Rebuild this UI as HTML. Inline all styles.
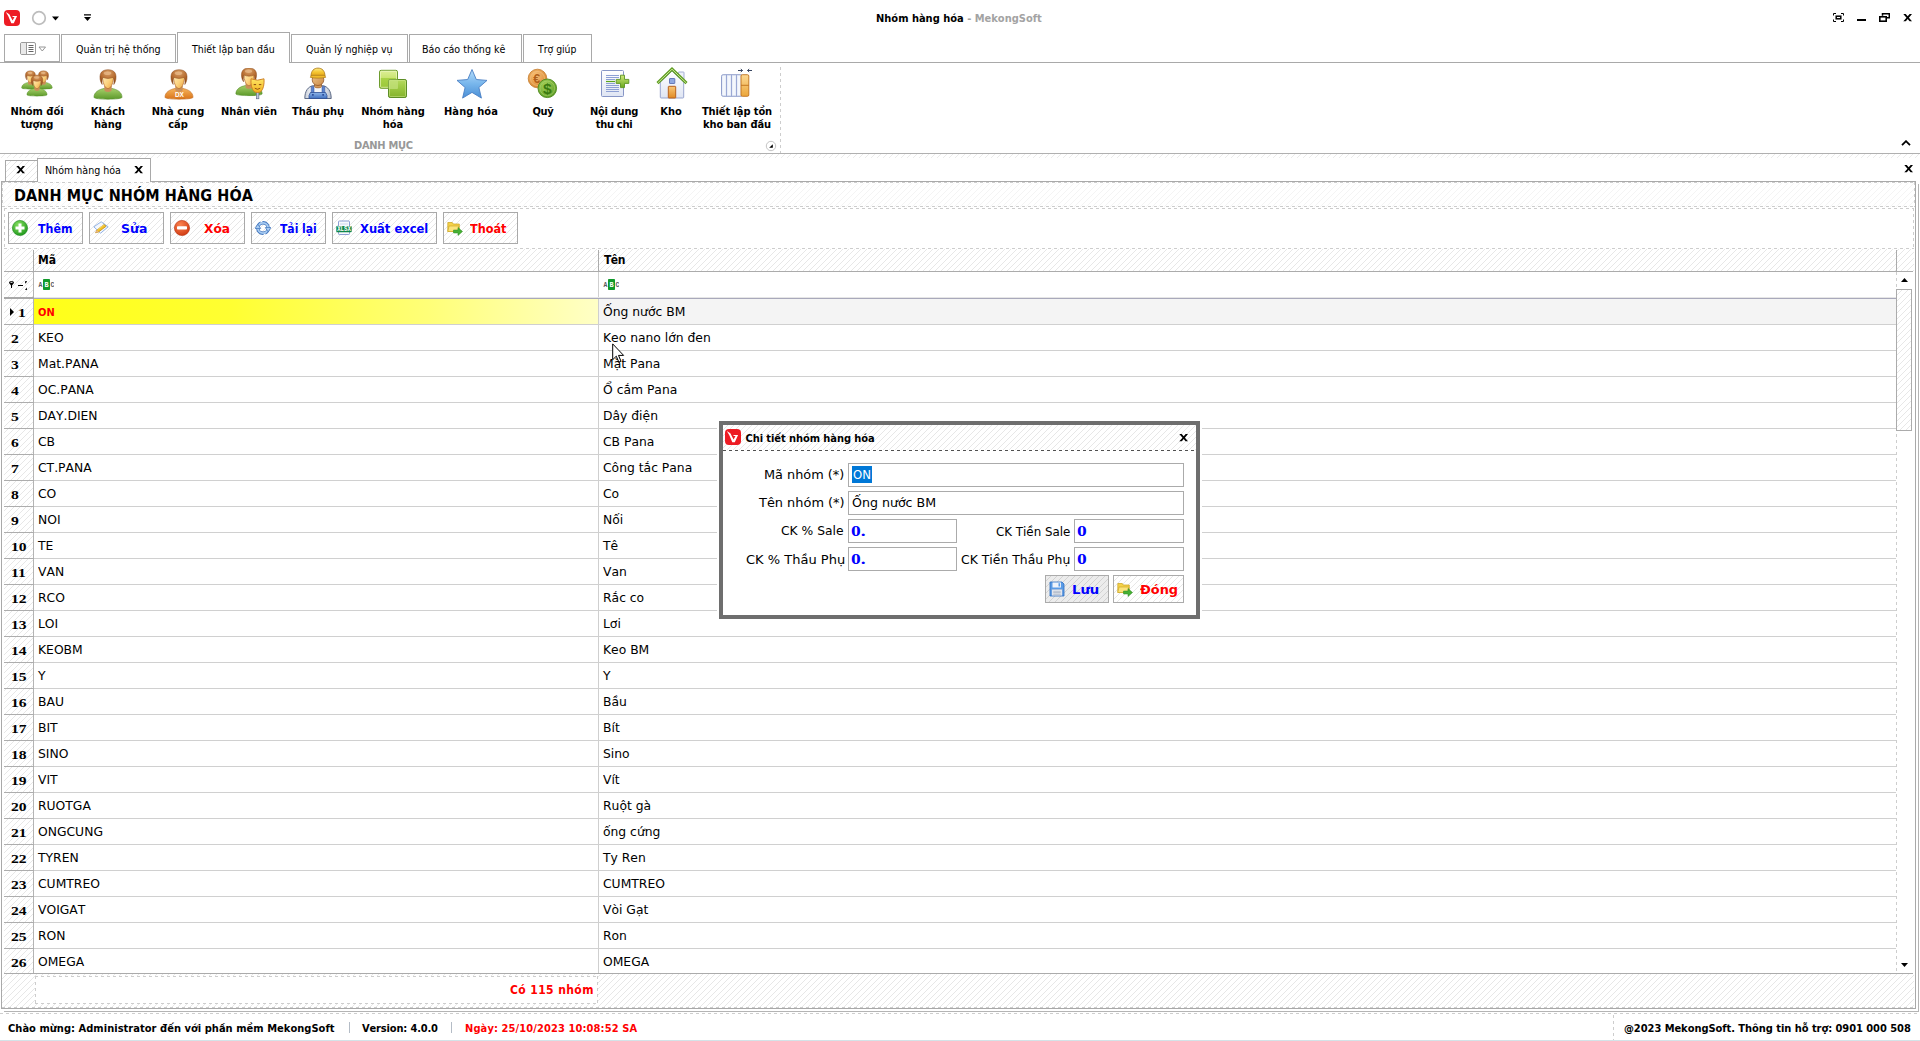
<!DOCTYPE html>
<html lang="vi"><head><meta charset="utf-8"><title>Nhóm hàng hóa - MekongSoft</title>
<style>
*{box-sizing:border-box;margin:0;padding:0}
html,body{width:1920px;height:1041px;overflow:hidden;background:#fff}
body{position:relative;font-family:"DejaVu Sans Condensed","Liberation Sans",sans-serif;font-size:11px;color:#000;-webkit-font-smoothing:antialiased;font-kerning:none;font-variant-ligatures:none}
.abs,#app div,#app span,#app svg{position:absolute}
#app{position:absolute;left:0;top:0;width:1920px;height:1041px;overflow:hidden}
.hatch{background-color:#fff;background-image:repeating-linear-gradient(135deg,rgba(0,0,0,0) 0,rgba(0,0,0,0) 3.45px,#e7e7e7 3.45px,#e7e7e7 4.2426px)}
.hatchf{background-color:#fff;background-image:repeating-linear-gradient(135deg,rgba(0,0,0,0) 0,rgba(0,0,0,0) 3.45px,#f4f4f4 3.45px,#f4f4f4 4.2426px)}
.hatch2{background-color:#ececec;background-image:repeating-linear-gradient(135deg,rgba(0,0,0,0) 0,rgba(0,0,0,0) 3.45px,#d2d2d2 3.45px,#d2d2d2 4.2426px)}
.t{white-space:nowrap;line-height:1}
.b{font-weight:bold}
/* ribbon tabs */
.rtab{top:34px;height:28px;border:1px solid #a9a9a9;border-bottom:none;background:#fff}
.rtab.act{top:32px;height:31px;z-index:2}
.rtab .t{top:9px;font-size:11px}
.rtab.act .t{top:11px}
.rl{font-weight:bold;font-size:11px;text-align:center;line-height:13px;white-space:nowrap;transform:translateX(-50%)}
/* toolbar buttons */
.tb{top:212px;height:32px;border:1px solid #a9a9a9}
.tb .t{font-weight:bold;font-size:13px;top:9px}
.dash{background-image:repeating-linear-gradient(90deg,#cdcdcd 0,#cdcdcd 3px,rgba(0,0,0,0) 3px,rgba(0,0,0,0) 6px),repeating-linear-gradient(90deg,#cdcdcd 0,#cdcdcd 3px,rgba(0,0,0,0) 3px,rgba(0,0,0,0) 6px),repeating-linear-gradient(180deg,#cdcdcd 0,#cdcdcd 3px,rgba(0,0,0,0) 3px,rgba(0,0,0,0) 6px),repeating-linear-gradient(180deg,#cdcdcd 0,#cdcdcd 3px,rgba(0,0,0,0) 3px,rgba(0,0,0,0) 6px);background-size:100% 1px,100% 1px,1px 100%,1px 100%;background-position:0 0,0 100%,0 0,100% 0;background-repeat:no-repeat}
.dh{height:1px;background-image:repeating-linear-gradient(90deg,#cdcdcd 0,#cdcdcd 3px,rgba(0,0,0,0) 3px,rgba(0,0,0,0) 6px)}
.dv{width:1px;background-image:repeating-linear-gradient(180deg,#cdcdcd 0,#cdcdcd 3px,rgba(0,0,0,0) 3px,rgba(0,0,0,0) 6px)}
.hl{height:1px;background:#c9c9c9;left:4px;width:1892px}
.row{left:4px;width:1892px;height:26px}
.row .rn{left:6.600px;top:0;height:25px;font:bold 13px/27px "Liberation Serif",serif;transform:scaleX(1.2);transform-origin:0 0}
.row.sel .rn{left:14.200px}
.row .c1{left:34px;top:6px;font-size:13px;line-height:13px;white-space:nowrap;transform:scaleX(1.055);transform-origin:0 0}
.row .c2{left:599px;top:6px;font-size:13px;line-height:13px;white-space:nowrap;transform:scaleX(1.055);transform-origin:0 0}
.row::after{content:"";position:absolute;left:0;top:25px;width:1892px;height:1px;background:linear-gradient(90deg,#adadad 0,#adadad 30px,#d0d0d0 30px)}
.row.sel .c1{color:#f00;font-weight:bold;font-size:11px;top:7px;transform:none}
/* dialog */
.fld{border:1px solid #ababab;background:#fff;height:24px}
.lbl{font-size:13px;line-height:13px;white-space:nowrap}
.num{font:bold 15px/15px "Liberation Serif",serif;color:#00f;left:2px;top:4px;transform:scaleX(1.3);transform-origin:0 0}

</style></head>
<body>
<style>
#ttl{margin-left:0.0px;margin-top:0px;letter-spacing:0.0px;}
#rt1{margin-left:0.0px;margin-top:0px;transform:scaleX(0.9655);transform-origin:0 0;}
#rt2{margin-left:0.0px;margin-top:0px;transform:scaleX(0.9535);transform-origin:0 0;}
#rt3{margin-left:0.0px;margin-top:0px;transform:scaleX(0.9558);transform-origin:0 0;}
#rt4{margin-left:-2.0px;margin-top:0px;transform:scaleX(0.9647);transform-origin:0 0;}
#rt5{margin-left:-0.5px;margin-top:0px;transform:scaleX(0.9394);transform-origin:0 0;}
#rl1{margin-left:0.0px;margin-top:0px;letter-spacing:0.0px;}
#rl4{margin-left:0.0px;margin-top:0px;letter-spacing:0.0px;}
#rl7{margin-left:0.0px;margin-top:0px;letter-spacing:0.14px;}
#rl8{margin-left:0.0px;margin-top:0px;letter-spacing:-0.25px;}
#rl9{margin-left:0.0px;margin-top:0px;letter-spacing:-0.286px;}
#rl10{margin-left:0.0px;margin-top:0px;letter-spacing:0.0px;}
#rl11{margin-left:1.0px;margin-top:0px;letter-spacing:-0.084px;}
#dtab{margin-left:-1.0px;margin-top:0px;transform:scaleX(0.9616);transform-origin:0 0;}
#ptitle{margin-left:0.0px;margin-top:0px;letter-spacing:0.095px;}
#tb1{margin-left:0.0px;margin-top:0px;transform:scaleX(0.9444);transform-origin:0 0;}
#tb2{margin-left:-1.6px;margin-top:0px;transform:scaleX(1.0697);transform-origin:0 0;}
#tb3{margin-left:0.0px;margin-top:0px;transform:scaleX(1.0423);transform-origin:0 0;}
#tb4{margin-left:0.0px;margin-top:0px;transform:scaleX(0.9235);transform-origin:0 0;}
#tb5{margin-left:0.0px;margin-top:0px;transform:scaleX(0.9855);transform-origin:0 0;}
#tb6{margin-left:-0.6px;margin-top:0px;transform:scaleX(0.9634);transform-origin:0 0;}
#h1{margin-left:0.0px;margin-top:0px;letter-spacing:0.0px;}
#h2{margin-left:1.0px;margin-top:0px;letter-spacing:-0.5px;}
#st1{margin-left:0.0px;margin-top:0px;letter-spacing:0.039px;}
#st2{margin-left:0.0px;margin-top:0px;letter-spacing:-0.154px;}
#st3{margin-left:0.0px;margin-top:0px;letter-spacing:0.111px;}
#st4{margin-left:0.0px;margin-top:0px;letter-spacing:-0.042px;}
#dttl{margin-left:0.5px;margin-top:0px;letter-spacing:-0.07px;}
#bluu{margin-left:-1.6px;margin-top:0px;transform:scaleX(1.1304);transform-origin:0 0;}
#bdong{margin-left:-0.4px;margin-top:0px;transform:scaleX(1.1004);transform-origin:0 0;}
#foot{margin-left:0.0px;margin-top:0px;letter-spacing:0.4px;}
#lb1{margin-left:-1.0px;margin-top:0px;transform:scaleX(1.0988);transform-origin:0 0;}
#lb2{margin-left:0.0px;margin-top:0px;transform:scaleX(1.1039);transform-origin:0 0;}
#lb3{margin-left:0.0px;margin-top:0px;transform:scaleX(1.0525);transform-origin:0 0;}
#lb4{margin-left:0.0px;margin-top:0px;transform:scaleX(1.0142);transform-origin:0 0;}
#lb5{margin-left:0.0px;margin-top:0px;transform:scaleX(1.1125);transform-origin:0 0;}
#lb6{margin-left:0.0px;margin-top:0px;transform:scaleX(1.0608);transform-origin:0 0;}
#grp{margin-left:0.0px;margin-top:0px;letter-spacing:-0.286px;}
#f2{margin-left:-0.8px;margin-top:0px;transform:scaleX(1.0779);transform-origin:0 0;}
</style>
<svg width="0" height="0" style="position:absolute">
<defs>
<linearGradient id="gFace" x1="0" y1="0" x2="1" y2="1"><stop offset="0" stop-color="#fff1c4"/><stop offset=".55" stop-color="#fcd27e"/><stop offset="1" stop-color="#e9a03c"/></linearGradient>
<radialGradient id="gHair" cx=".5" cy=".2" r=".8"><stop offset="0" stop-color="#d9a066"/><stop offset=".6" stop-color="#b56a2e"/><stop offset="1" stop-color="#8a4516"/></radialGradient>
<linearGradient id="gGreen" x1="0" y1="0" x2="0" y2="1"><stop offset="0" stop-color="#a6cf6a"/><stop offset="1" stop-color="#5d9a2b"/></linearGradient>
<linearGradient id="gOrange" x1="0" y1="0" x2="0" y2="1"><stop offset="0" stop-color="#f6b35a"/><stop offset="1" stop-color="#d9741a"/></linearGradient>
<linearGradient id="gBlue" x1="0" y1="0" x2="0" y2="1"><stop offset="0" stop-color="#8db4e8"/><stop offset="1" stop-color="#3f6fc0"/></linearGradient>
<linearGradient id="gStar" x1="0" y1="0" x2="0" y2="1"><stop offset="0" stop-color="#b4dcfa"/><stop offset=".5" stop-color="#78b6ec"/><stop offset="1" stop-color="#4a8fd6"/></linearGradient>
<linearGradient id="gSq" x1="0" y1="0" x2="1" y2="1"><stop offset="0" stop-color="#c4e27a"/><stop offset="1" stop-color="#6fa52e"/></linearGradient>
<linearGradient id="gDoc" x1="0" y1="0" x2="0" y2="1"><stop offset="0" stop-color="#ffffff"/><stop offset="1" stop-color="#dfe5f3"/></linearGradient>
<linearGradient id="gDoor" x1="0" y1="0" x2="0" y2="1"><stop offset="0" stop-color="#f9c777"/><stop offset="1" stop-color="#e08a24"/></linearGradient>
<linearGradient id="gColsO" x1="0" y1="0" x2="0" y2="1"><stop offset="0" stop-color="#fcd994"/><stop offset="1" stop-color="#eba63a"/></linearGradient>
<linearGradient id="gMask" x1="0" y1="0" x2="0" y2="1"><stop offset="0" stop-color="#fde664"/><stop offset="1" stop-color="#f2b11e"/></linearGradient>
<linearGradient id="gHelm" x1="0" y1="0" x2="0" y2="1"><stop offset="0" stop-color="#fdeb8c"/><stop offset=".45" stop-color="#f6c935"/><stop offset="1" stop-color="#e3a013"/></linearGradient>
<linearGradient id="gSq1" x1="0" y1="0" x2="0" y2="1"><stop offset="0" stop-color="#deef98"/><stop offset=".4" stop-color="#cbe574"/><stop offset=".43" stop-color="#a9d346"/><stop offset="1" stop-color="#9ac63a"/></linearGradient>
<linearGradient id="gSq2" x1="0" y1="0" x2="0" y2="1"><stop offset="0" stop-color="#b8da62"/><stop offset=".35" stop-color="#a2cd48"/><stop offset="1" stop-color="#84b22c"/></linearGradient>
<linearGradient id="gWork" x1="0" y1="0" x2="1" y2="0"><stop offset="0" stop-color="#c9cfda"/><stop offset=".25" stop-color="#f1f3f6"/><stop offset=".75" stop-color="#e3e6ec"/><stop offset="1" stop-color="#b4bccb"/></linearGradient>
<linearGradient id="gFaceW" x1="0" y1="0" x2="1" y2="1"><stop offset="0" stop-color="#f0c48a"/><stop offset="1" stop-color="#c98a48"/></linearGradient>
<linearGradient id="gPlusG" x1="0" y1="0" x2="0" y2="1"><stop offset="0" stop-color="#cfea7c"/><stop offset="1" stop-color="#69a81e"/></linearGradient>
<radialGradient id="gPlus" cx=".4" cy=".3" r=".8"><stop offset="0" stop-color="#86e060"/><stop offset="1" stop-color="#149014"/></radialGradient>
<radialGradient id="gMinus" cx=".4" cy=".3" r=".8"><stop offset="0" stop-color="#fb8350"/><stop offset="1" stop-color="#cc330c"/></radialGradient>
<radialGradient id="gCoinO" cx=".4" cy=".35" r=".7"><stop offset="0" stop-color="#f9c27a"/><stop offset="1" stop-color="#d5832c"/></radialGradient>
<radialGradient id="gCoinG" cx=".4" cy=".35" r=".7"><stop offset="0" stop-color="#a7d35c"/><stop offset="1" stop-color="#5a9a24"/></radialGradient>

<symbol id="logo" viewBox="0 0 16 16"><rect width="16" height="16" rx="4" fill="#ed1c24"/><path d="M1.800 2.100l3.500 2.100 3.300 6.400 1.900-3.700-2.300.200.600-1h4.300l-3.300 7.100h-2.500l-3.100-7.100z" fill="#fff"/></symbol>

<symbol id="p-head" viewBox="0 0 32 32">
<path d="M12.300 18h7.400v4c0 2.600-7.400 2.600-7.400 0z" fill="#c98f5a"/>
<path d="M10.600 9.500c0-3 2.400-4.500 5.400-4.500s5.400 1.500 5.400 4.500c0 5-2 9-3.600 10.400-1.200.900-2.400.900-3.600 0-1.600-1.400-3.600-5.400-3.600-10.400z" fill="url(#gFace)" stroke="#b0642a" stroke-width=".7"/>
<path d="M10.200 16.500c-2.200-3-2.800-7.500-1.800-10.500 1-3 4-4.300 7.600-4.300s6.600 1.300 7.600 4.300c1 3 .400 7.500-1.800 10.500.500-3 .300-5.500-.800-7.200-2.400 1.500-7.600 1.500-10 0-1.100 1.700-1.300 4.200-.800 7.200z" fill="url(#gHair)" stroke="#8a4a1c" stroke-width=".5"/>
<ellipse cx="15.500" cy="5.200" rx="3.800" ry="1.800" fill="#e8b98a" opacity=".75"/>
</symbol>
<symbol id="p-green" viewBox="0 0 32 32">
<path d="M2 29.300c0-5 4.500-7.800 10.300-8.900l3.700 2.300 3.700-2.300c5.800 1.100 10.300 3.900 10.300 8.900 0 2.500-28 2.500-28 0z" fill="url(#gGreen)" stroke="#4f8a22" stroke-width=".6"/>
<use href="#p-head"/>
</symbol>
<symbol id="p-orange" viewBox="0 0 32 32">
<path d="M2 29.300c0-5 4.500-7.800 10.300-8.900l3.700 2.300 3.700-2.300c5.800 1.100 10.300 3.900 10.300 8.900 0 2.500-28 2.500-28 0z" fill="url(#gOrange)" stroke="#c0661a" stroke-width=".6"/>
<use href="#p-head"/>
</symbol>
<symbol id="i-group" viewBox="0 0 32 32">
<use href="#p-green" x="1" y="3" width="17" height="17"/>
<use href="#p-green" x="14" y="3" width="17" height="17"/>
<use href="#p-green" x="6" y="9" width="21" height="21"/>
</symbol>
<symbol id="i-mask" viewBox="0 0 32 32">
<use href="#p-green" x="0" y="-1.600" width="30" height="30"/>
<rect x="22.300" y="24" width="2.600" height="6.800" fill="#bcc6d8" stroke="#56637f" stroke-width=".6"/>
<path d="M17 10.800q6.500 2.800 13 0c.400 5.500-.600 10.200-3 12.700-1.600 1.300-5.400 1.300-7 0-2.400-2.500-3.400-7.200-3-12.700z" fill="url(#gMask)" stroke="#cf8327" stroke-width="1" stroke-linejoin="round"/>
<path d="M19.700 16.600h2.400M24.900 16.600h2.400" stroke="#8a4a12" stroke-width="1"/>
<path d="M20.800 20.200q2.700 2.200 5.400 0" stroke="#8a4a12" stroke-width=".9" fill="none"/>
</symbol>
<symbol id="i-worker" viewBox="0 0 32 32">
<path d="M2.800 31.500c0-7.500 3.200-12 8.700-12.900h9c5.500.9 8.700 5.400 8.700 12.900z" fill="url(#gWork)" stroke="#4f5d7c" stroke-width=".9"/>
<rect x="11.800" y="20" width="8.400" height="5.500" fill="#f3f5f8"/>
<path d="M9.200 19.400h2.800v7h-2.800zM20 19.400h2.800v7h-2.800z" fill="#5b82cf" stroke="#2f4f94" stroke-width=".5"/>
<path d="M8.400 25.500h15.200l1.400 3v3h-18v-3z" fill="url(#gBlue)" stroke="#2f4f94" stroke-width=".8"/>
<circle cx="10.900" cy="27.800" r=".9" fill="#1c3a8c"/><circle cx="21.100" cy="27.800" r=".9" fill="#1c3a8c"/>
<path d="M12.500 16h7v3.400c0 2-7 2-7 0z" fill="#d39a5c" stroke="#8a4a1c" stroke-width=".5"/>
<ellipse cx="16" cy="12.800" rx="5.800" ry="5.700" fill="url(#gFaceW)" stroke="#8a4a1c" stroke-width=".7"/>
<path d="M9 9.400c0-5.700 3-8.300 7-8.300s7 2.600 7 8.300z" fill="url(#gHelm)" stroke="#a8761a" stroke-width=".8"/>
<path d="M9.300 8.300h13.400l.9 2.100c-4 1-11.200 1-15.200 0z" fill="#f1bc2c" stroke="#a8761a" stroke-width=".7"/>
</symbol>
<symbol id="i-squares" viewBox="0 0 32 32">
<rect x="2.500" y="2.300" width="18" height="18" rx="1.600" fill="url(#gSq1)" stroke="#6d9c2e" stroke-width="1"/>
<rect x="3.500" y="3.300" width="16" height="16" rx="1" fill="none" stroke="#eef8c8" stroke-width=".8" opacity=".8"/>
<rect x="11.500" y="11.500" width="18" height="18" rx="1.600" fill="url(#gSq2)" stroke="#5c8c26" stroke-width="1"/>
<rect x="12.500" y="12.500" width="16" height="16" rx="1" fill="none" stroke="#d4ec98" stroke-width=".8" opacity=".6"/>
<rect x="11.500" y="11.500" width="9.500" height="9.500" rx="1" fill="#c6e280" opacity=".7"/>
</symbol>
<symbol id="i-star" viewBox="0 0 32 32">
<path d="M16 1.500l4.300 10 10.700.9-8.100 7.100 2.500 10.600-9.400-5.700-9.400 5.700 2.500-10.600-8.100-7.100 10.700-.9z" fill="url(#gStar)" stroke="#4a7fc4" stroke-width=".9" stroke-linejoin="round"/>
</symbol>
<symbol id="i-coins" viewBox="0 0 32 32">
<circle cx="11.500" cy="10.500" r="9.300" fill="url(#gCoinO)" stroke="#c47a2a" stroke-width=".8"/>
<circle cx="11.500" cy="10.500" r="7" fill="none" stroke="#f8cf92" stroke-width=".7" opacity=".7"/>
<text x="10.800" y="15" font-family="Liberation Sans,sans-serif" font-weight="bold" font-size="12.500" text-anchor="middle" fill="#b0601a">€</text>
<circle cx="21.300" cy="20.300" r="9.300" fill="url(#gCoinG)" stroke="#4f8a1e" stroke-width=".9"/>
<circle cx="21.300" cy="20.300" r="7.300" fill="none" stroke="#c4e486" stroke-width=".7" opacity=".6"/>
<text x="21.300" y="26" font-family="Liberation Sans,sans-serif" font-weight="bold" font-size="15.500" text-anchor="middle" fill="#3a7a10">$</text>
</symbol>
<symbol id="i-doc" viewBox="0 0 32 32">
<rect x="3.500" y="2.500" width="22" height="26" rx="1" fill="url(#gDoc)" stroke="#8796c6" stroke-width="1"/>
<path d="M8 7.500h13M8 9.500h13M8 11.500h9M8 15.500h9M8 17.500h13M8 19.500h13M8 21.500h13M8 23.500h13" stroke="#8da0d4" stroke-width="1"/>
<path d="M8 13.500h9" stroke="#5aa51c" stroke-width="1.200"/>
<path d="M22.500 7.200h4v4.200h4.300v4h-4.300v4.200h-4v-4.200h-4.300v-4h4.300z" fill="url(#gPlusG)" stroke="#5c9424" stroke-width=".9" stroke-linejoin="round"/>
</symbol>
<symbol id="i-house" viewBox="0 0 32 32">
<rect x="22.300" y="5" width="5.700" height="9" rx=".6" fill="#eef1f9" stroke="#8f9dcb" stroke-width=".8"/>
<path d="M4.300 15l11.700-11 11.700 11v15.200c0 .5-.3.800-.8.800h-21.800c-.5 0-.8-.3-.8-.8z" fill="url(#gDoc)" stroke="#8f9dcb" stroke-width=".9"/>
<rect x="12.300" y="19.300" width="7.400" height="11.700" rx=".5" fill="url(#gDoor)" stroke="#b8601c" stroke-width="1"/>
<rect x="13.500" y="11.500" width="5.300" height="5" rx=".4" fill="#8fa8e0" stroke="#5c70b4" stroke-width=".9"/>
<path d="M1.500 16.200l14.500-14 14.500 14" fill="none" stroke="#5f9c22" stroke-width="3" stroke-linejoin="miter"/>
<path d="M1.900 15.800l14.100-13.600 14.100 13.600" fill="none" stroke="#d6f0a4" stroke-width=".9"/>
</symbol>
<symbol id="i-cols" viewBox="0 0 32 32">
<rect x="1.500" y="6.700" width="21" height="21.600" rx="1.600" fill="#e9eef8" stroke="#8796c6" stroke-width=".9"/>
<path d="M6.500 6.700v21.600M11.500 6.700v21.600M16.500 6.700v21.600" stroke="#9aa8d4" stroke-width="1"/>
<path d="M4 8v19M9 8v19M14 8v19M19 8v19" stroke="#fff" stroke-width="1.500" opacity=".7"/>
<rect x="21" y="6.700" width="7.800" height="21.600" rx="1.300" fill="url(#gColsO)" stroke="#c0701c" stroke-width=".9"/>
<path d="M21 17.300h7.800" stroke="#c0701c" stroke-width=".9"/>
<path d="M18 2.500h4.500M20.800 1l1.700 1.500-1.700 1.500M32 2.500h-4.500M29.200 1l-1.700 1.500 1.700 1.500" stroke="#35435f" stroke-width="1" fill="none"/>
</symbol>

<symbol id="s-plus" viewBox="0 0 16 16"><circle cx="8" cy="8" r="7.600" fill="url(#gPlus)" stroke="#1c8a1c" stroke-width=".6"/><path d="M6.500 3.500h3v3h3v3h-3v3h-3v-3h-3v-3h3z" fill="#fff"/></symbol>
<symbol id="s-minus" viewBox="0 0 16 16"><circle cx="8" cy="8" r="7.600" fill="url(#gMinus)" stroke="#b8300e" stroke-width=".6"/><rect x="3" y="6.300" width="10" height="3.200" rx=".8" fill="#fff"/></symbol>
<symbol id="s-edit" viewBox="0 0 16 16"><path d="M.8 6.800l7.400-5 7 5-7.600 6.400z" fill="#f4f8fe" stroke="#86a9e2" stroke-width=".9" stroke-linejoin="round"/><path d="M2.600 12.800l1.200-2.700 7.400-5.700 1.900 1.900-7.600 5.700z" fill="#f5c228" stroke="#b07f10" stroke-width=".7" stroke-linejoin="round"/><path d="M4.500 9.700l6.600-5" stroke="#fbe48a" stroke-width=".8"/><path d="M2.600 12.800l1.200-2.700 1.700 1.900z" fill="#e9b58e"/></symbol>
<symbol id="s-refresh" viewBox="0 0 16 16"><circle cx="8" cy="8" r="5.200" fill="none" stroke="#3f74bd" stroke-width="3.400"/><circle cx="8" cy="8" r="5.200" fill="none" stroke="#a9cdf3" stroke-width="1.800"/><path d="M0 8.500l2.800-4.300 2.900 4.300z" fill="#a9cdf3" stroke="#3f74bd" stroke-width=".7"/><path d="M16 7.500l-2.800 4.300-2.900-4.300z" fill="#a9cdf3" stroke="#3f74bd" stroke-width=".7"/><path d="M5.500 2.200l2-1.700M10.500 13.800l-2 1.700" stroke="#fff" stroke-width="1.300"/></symbol>
<symbol id="s-xlsx" viewBox="0 0 16 16"><rect x="2.500" y="1" width="11" height="13.500" rx=".8" fill="#f7f9fd" stroke="#8093cf" stroke-width=".9"/><path d="M4 4h8" stroke="#c5cfea" stroke-width=".8"/><rect x=".3" y="6" width="15.400" height="6.200" rx=".8" fill="#10864b"/><text x="8" y="11.300" font-family="Liberation Mono,monospace" font-weight="bold" font-size="6.400" text-anchor="middle" fill="#fff" textLength="13.600" lengthAdjust="spacingAndGlyphs">XLSX</text></symbol>
<symbol id="s-folder" viewBox="0 0 16 16"><path d="M.8 2.500h4.500l1 1.500h6v7.500h-11.500z" fill="#f5d24a" stroke="#c9a21c" stroke-width=".7"/><path d="M.8 11.500l1.200-5.500h9.800l-1 5.500z" fill="#fbe37a" stroke="#c9a21c" stroke-width=".6"/><path d="M6.500 10h4.500v-2.500l4.500 4-4.500 4v-2.500h-4.500z" fill="#46b034" stroke="#2c8a20" stroke-width=".5"/></symbol>
<symbol id="s-save" viewBox="0 0 16 16"><path d="M1 1h12l2 2v12h-14z" fill="#5a9be6" stroke="#2f6fc2" stroke-width=".8"/><rect x="3.500" y="1.500" width="8.500" height="5" fill="#eef3fb"/><rect x="9.500" y="2.200" width="1.600" height="3.300" fill="#5a9be6"/><rect x="3" y="8.500" width="10" height="6" fill="#f4f6fa" stroke="#aab5cc" stroke-width=".5"/><path d="M4.200 10.200h7.600M4.200 11.700h7.600M4.200 13.200h7.600" stroke="#8d98ad" stroke-width=".7"/></symbol>
<symbol id="s-abc" viewBox="0 0 16 11"><rect x="5" y="0" width="7" height="11" rx=".8" fill="#119a2b"/><text x="2.400" y="8" font-family="Liberation Mono,monospace" font-size="6.400" font-weight="bold" text-anchor="middle" fill="#5a5a5a">A</text><text x="8.500" y="8" font-family="Liberation Mono,monospace" font-size="6.800" font-weight="bold" text-anchor="middle" fill="#fff">B</text><text x="14.500" y="8" font-family="Liberation Mono,monospace" font-size="6.400" font-weight="bold" text-anchor="middle" fill="#5a5a5a">C</text></symbol>
<symbol id="s-x" viewBox="0 0 10 8"><path d="M.3 0h2.600l2.100 2.400 2.100-2.400h2.600l-3.400 3.900 3.600 4.100h-2.700l-2.200-2.600-2.200 2.600h-2.700l3.600-4.100z" fill="#000"/></symbol>
</defs>
</svg>

<div id="app">
<!-- title bar -->
<svg style="left:4px;top:10px" width="16" height="16"><use href="#logo"/></svg>
<svg style="left:31px;top:10px" width="16" height="16" viewBox="0 0 16 16"><circle cx="8" cy="8" r="6.300" fill="#fff" stroke="#bdbdbd" stroke-width="1.700"/></svg>
<svg style="left:52px;top:15.600px" width="8" height="5" viewBox="0 0 8 5"><path d="M0 .5h7l-3.500 4z" fill="#000"/></svg>
<svg style="left:83px;top:14px" width="9" height="8" viewBox="0 0 9 8"><path d="M1 .2h7v1.300h-7zM1 3h7l-3.500 4z" fill="#000"/></svg>
<span class="t b" id="ttl" style="left:876px;top:13px;font-size:11px">Nhóm hàng hóa<span style="position:static;color:#a3a3a3"> - MekongSoft</span></span>
<svg style="left:1833px;top:13px" width="11" height="9" viewBox="0 0 11 9"><path d="M.5 2.500v-2h2.500M8 .5h2.500v2M10.500 6.500v2h-2.500M3 8.500h-2.500v-2" fill="none" stroke="#000" stroke-width="1"/><rect x="3.200" y="3.200" width="4.600" height="2.600" fill="none" stroke="#000" stroke-width="1.500"/></svg>
<div style="left:1857px;top:19px;width:9px;height:2px;background:#000"></div>
<svg style="left:1879px;top:13px" width="11" height="9" viewBox="0 0 11 9"><path d="M3.500 2.800v-2h6.800v4h-2.300" fill="none" stroke="#000" stroke-width="1.500"/><rect x=".8" y="3.800" width="6.400" height="4.400" fill="#fff" stroke="#000" stroke-width="1.600"/></svg>
<svg style="left:1903px;top:14px" width="9.400" height="7.500"><use href="#s-x"/></svg>

<!-- ribbon tabs -->
<div class="rtab" style="left:4px;width:56px;height:28px;border-bottom:1px solid #a9a9a9">
 <svg style="left:15px;top:7px" width="27" height="14" viewBox="0 0 27 14"><rect x=".5" y=".5" width="15" height="12" rx="1.500" fill="#fff" stroke="#9a9a9a"/><rect x="1" y="1" width="5" height="11" fill="#e9e9e9"/><path d="M6.500 .5v12" stroke="#9a9a9a"/><path d="M8.500 3.500h5M8.500 5.500h5M8.500 7.500h5M8.500 9.500h5" stroke="#555" stroke-width=".9"/><path d="M19 5h6.500l-3.250 4z" fill="#fff" stroke="#8a8a8a" stroke-width=".9"/></svg>
</div>
<div class="rtab" style="left:61px;width:115px"><span class="t" id="rt1" style="left:14px">Quản trị hệ thống</span></div>
<div class="rtab act" style="left:177px;width:113px"><span class="t" id="rt2" style="left:14px">Thiết lập ban đầu</span></div>
<div class="rtab" style="left:291px;width:117px"><span class="t" id="rt3" style="left:14px">Quản lý nghiệp vụ</span></div>
<div class="rtab" style="left:409px;width:113px"><span class="t" id="rt4" style="left:14px">Báo cáo thống kê</span></div>
<div class="rtab" style="left:523px;width:69px"><span class="t" id="rt5" style="left:14px">Trợ giúp</span></div>

<div style="left:0;top:62px;width:1920px;height:1px;background:#a9a9a9;z-index:1"></div>
<!-- ribbon items -->
<svg style="left:19px;top:67px" width="36" height="32" viewBox="0 0 36 32"><use href="#p-green" x="1.400" y="2.700" width="20" height="20"/><use href="#p-green" x="14.500" y="2.700" width="20" height="20"/><use href="#p-green" x="6.500" y="6.800" width="23" height="23"/></svg>
<span class="rl" id="rl1" style="left:37px;top:105px">Nhóm đối<br>tượng</span>
<svg style="left:92px;top:68px" width="32" height="32"><use href="#p-green"/></svg>
<span class="rl" id="rl2" style="left:108px;top:105px">Khách<br>hàng</span>
<svg style="left:163px;top:68px" width="32" height="32"><use href="#p-orange"/></svg>
<span class="t b" style="left:175px;top:92px;font-size:6.500px;color:#fff;font-family:'Liberation Sans',sans-serif;letter-spacing:-.3px">DX</span>
<span class="rl" id="rl3" style="left:178px;top:105px">Nhà cung<br>cấp</span>
<svg style="left:234px;top:68px" width="32" height="32"><use href="#i-mask"/></svg>
<span class="rl" id="rl4" style="left:249px;top:105px">Nhân viên</span>
<svg style="left:302px;top:67px" width="32" height="32"><use href="#i-worker"/></svg>
<span class="rl" id="rl5" style="left:318px;top:105px">Thầu phụ</span>
<svg style="left:377px;top:68px" width="32" height="32"><use href="#i-squares"/></svg>
<span class="rl" id="rl6" style="left:393px;top:105px">Nhóm hàng<br>hóa</span>
<svg style="left:456px;top:68px" width="32" height="32"><use href="#i-star"/></svg>
<span class="rl" id="rl7" style="left:471px;top:105px">Hàng hóa</span>
<svg style="left:526px;top:68px" width="32" height="32"><use href="#i-coins"/></svg>
<span class="rl" id="rl8" style="left:543px;top:105px">Quỹ</span>
<svg style="left:598px;top:68px" width="32" height="32"><use href="#i-doc"/></svg>
<span class="rl" id="rl9" style="left:614px;top:105px">Nội dung<br>thu chi</span>
<svg style="left:656px;top:67px" width="32" height="32"><use href="#i-house"/></svg>
<span class="rl" id="rl10" style="left:671px;top:105px">Kho</span>
<svg style="left:720px;top:68px" width="32" height="32"><use href="#i-cols"/></svg>
<span class="rl" id="rl11" style="left:736px;top:105px">Thiết lập tồn<br>kho ban đầu</span>
<span class="t b" id="grp" style="left:354px;top:140px;font-size:11px;color:#989898">DANH MỤC</span>
<svg style="left:765px;top:140px" width="12" height="12" viewBox="0 0 12 12"><circle cx="6" cy="6" r="4.700" fill="#fff" stroke="#c4c4c4" stroke-width="1"/><path d="M7.800 4.200v3.600h-3.600z" fill="#000"/></svg>
<div class="dv" style="left:780px;top:67px;height:86px"></div>
<svg style="left:1901px;top:140px" width="10" height="6" viewBox="0 0 10 6"><path d="M1 5.200l4-4 4 4" fill="none" stroke="#000" stroke-width="1.800"/></svg>
<div style="left:0;top:153px;width:1920px;height:1px;background:#b0b0b0"></div>
<div class="hatch" style="left:0;top:154px;width:1920px;height:4px;opacity:.8"></div>

<!-- document tabs -->
<div class="hatch" style="left:5px;top:160px;width:33px;height:22px;border:1px solid #a9a9a9;border-bottom:none"></div>
<svg style="left:16px;top:166px" width="9.400" height="7.500"><use href="#s-x"/></svg>
<div style="left:37px;top:158px;width:114px;height:24px;border:1px solid #a9a9a9;border-bottom:none;background:#fff;z-index:3"></div>
<span class="t" id="dtab" style="left:46px;top:165px;font-size:11px;z-index:4">Nhóm hàng hóa</span>
<svg style="left:134px;top:166px;z-index:4" width="9.400" height="7.500"><use href="#s-x"/></svg>
<svg style="left:1904px;top:165px" width="9.400" height="7.500"><use href="#s-x"/></svg>

<!-- main panel -->
<div style="left:4px;top:184px;width:1915px;height:828px;border:1px solid #b4b4b4;border-left:none;border-top:none"></div>
<div style="left:1px;top:181px;width:1915px;height:828px;border:1px solid #a9a9a9;background:#fff"></div>
<div class="hatchf" style="left:2px;top:182px;width:1913px;height:25px"></div>
<div class="dash" style="left:2px;top:182px;width:1913px;height:25px"></div>
<span class="t b" id="ptitle" style="left:14px;top:188px;font-size:16px">DANH MỤC NHÓM HÀNG HÓA</span>
<div class="dash" style="left:4px;top:208px;width:1910px;height:41px"></div>

<!-- toolbar -->
<div class="tb hatch" style="left:8px;width:75px"><svg style="left:3px;top:7px" width="16" height="16"><use href="#s-plus"/></svg><span class="t" id="tb1" style="left:29px;color:#00f">Thêm</span></div>
<div class="tb hatch" style="left:89px;width:75px"><svg style="left:3px;top:7px" width="16" height="16"><use href="#s-edit"/></svg><span class="t" id="tb2" style="left:33px;color:#00f">Sửa</span></div>
<div class="tb hatch" style="left:170px;width:75px"><svg style="left:3px;top:7px" width="16" height="16"><use href="#s-minus"/></svg><span class="t" id="tb3" style="left:33px;color:#f00">Xóa</span></div>
<div class="tb hatch" style="left:251px;width:75px"><svg style="left:3px;top:7px" width="16" height="16"><use href="#s-refresh"/></svg><span class="t" id="tb4" style="left:28px;color:#00f">Tải lại</span></div>
<div class="tb hatch" style="left:332px;width:105px"><svg style="left:3px;top:7px" width="16" height="16"><use href="#s-xlsx"/></svg><span class="t" id="tb5" style="left:27px;color:#00f">Xuất excel</span></div>
<div class="tb hatch" style="left:443px;width:75px"><svg style="left:3px;top:7px" width="16" height="16"><use href="#s-folder"/></svg><span class="t" id="tb6" style="left:27px;color:#f00">Thoát</span></div>

<!-- grid header -->
<div class="hatch" style="left:4px;top:249px;width:1910px;height:22px"></div>
<div style="left:4px;top:271px;width:1909px;height:1px;background:#ababab"></div>
<div style="left:33px;top:250px;width:1px;height:22px;background:#ababab"></div>
<div style="left:598px;top:250px;width:1px;height:22px;background:#ababab"></div>
<div style="left:1896px;top:250px;width:1px;height:22px;background:#ababab"></div>
<span class="t b" id="h1" style="left:38px;top:254px;font-size:12px">Mã</span>
<span class="t b" id="h2" style="left:603px;top:254px;font-size:12px">Tên</span>
<!-- indicator column -->
<div class="hatch" style="left:4px;top:272px;width:29px;height:703px"></div>
<div style="left:33px;top:272px;width:1px;height:703px;background:#b4b4b4"></div>
<div style="left:598px;top:272px;width:1px;height:703px;background:#cfcfcf"></div>
<!-- filter row -->
<svg style="left:9px;top:281px" width="5" height="7" viewBox="0 0 5 7"><ellipse cx="2.500" cy="1.600" rx="2.500" ry="1.600" fill="#000"/><ellipse cx="2.500" cy="1.300" rx="1.200" ry=".5" fill="#fff"/><path d="M.5 2.500h4l-1.500 2v2.500h-1v-2.500z" fill="#000"/></svg>
<svg style="left:18px;top:280px" width="10" height="11" viewBox="0 0 10 11"><path d="M0 5.500h5" stroke="#000" stroke-width="1"/><path d="M7.300 1h1.700l-1 2.300h-1zM7 10l1.700-2.500.3 2.500z" fill="#000"/></svg>
<svg style="left:38px;top:279px" width="16" height="11"><use href="#s-abc"/></svg>
<svg style="left:603px;top:279px" width="16" height="11"><use href="#s-abc"/></svg>
<div style="left:4px;top:297px;width:30px;height:2px;background:#a8a8a8"></div>
<div style="left:34px;top:297px;width:1862px;height:1px;background:#e6e6e6"></div>
<div style="left:34px;top:298px;width:1862px;height:1px;background:#a9a9bb"></div>
<!-- selected row bg -->
<div style="left:34px;top:299px;width:564px;height:25px;background:linear-gradient(90deg,#ffff18 0,#ffff32 35%,#ffff78 70%,#ffffc6 100%)"></div>
<div style="left:599px;top:299px;width:1297px;height:25px;background:#f4f4f4"></div>
<svg style="left:10px;top:308px" width="4" height="8" viewBox="0 0 4 8"><path d="M0 0l4 4-4 4z" fill="#000"/></svg>
<!-- scrollbar -->
<div class="dv" style="left:1896px;top:272px;height:700px"></div>
<div style="left:1896px;top:272px;width:17px;height:702px;background:#fff"></div>
<div class="dv" style="left:1896px;top:272px;height:700px"></div>
<svg style="left:1901px;top:278px" width="7" height="4" viewBox="0 0 7 4"><path d="M0 4l3.500-4 3.500 4z" fill="#000"/></svg>
<div class="hatch" style="left:1896px;top:289px;width:16px;height:142px;border:1px solid #ababab"></div>
<svg style="left:1901px;top:963px" width="7" height="4" viewBox="0 0 7 4"><path d="M0 0l3.500 4 3.500-4z" fill="#000"/></svg>


<div id="rows">
<div class="row sel" style="top:299px"><span class="rn">1</span><span class="c1">ON</span><span class="c2">Ống nước BM</span></div>
<div class="row" style="top:325px"><span class="rn">2</span><span class="c1">KEO</span><span class="c2">Keo nano lớn đen</span></div>
<div class="row" style="top:351px"><span class="rn">3</span><span class="c1">Mat.PANA</span><span class="c2">Mặt Pana</span></div>
<div class="row" style="top:377px"><span class="rn">4</span><span class="c1">OC.PANA</span><span class="c2">Ổ cắm Pana</span></div>
<div class="row" style="top:403px"><span class="rn">5</span><span class="c1">DAY.DIEN</span><span class="c2">Dây điện</span></div>
<div class="row" style="top:429px"><span class="rn">6</span><span class="c1">CB</span><span class="c2">CB Pana</span></div>
<div class="row" style="top:455px"><span class="rn">7</span><span class="c1">CT.PANA</span><span class="c2">Công tắc Pana</span></div>
<div class="row" style="top:481px"><span class="rn">8</span><span class="c1">CO</span><span class="c2">Co</span></div>
<div class="row" style="top:507px"><span class="rn">9</span><span class="c1">NOI</span><span class="c2">Nối</span></div>
<div class="row" style="top:533px"><span class="rn">10</span><span class="c1">TE</span><span class="c2">Tê</span></div>
<div class="row" style="top:559px"><span class="rn">11</span><span class="c1">VAN</span><span class="c2">Van</span></div>
<div class="row" style="top:585px"><span class="rn">12</span><span class="c1">RCO</span><span class="c2">Rắc co</span></div>
<div class="row" style="top:611px"><span class="rn">13</span><span class="c1">LOI</span><span class="c2">Lơi</span></div>
<div class="row" style="top:637px"><span class="rn">14</span><span class="c1">KEOBM</span><span class="c2">Keo BM</span></div>
<div class="row" style="top:663px"><span class="rn">15</span><span class="c1">Y</span><span class="c2">Y</span></div>
<div class="row" style="top:689px"><span class="rn">16</span><span class="c1">BAU</span><span class="c2">Bầu</span></div>
<div class="row" style="top:715px"><span class="rn">17</span><span class="c1">BIT</span><span class="c2">Bít</span></div>
<div class="row" style="top:741px"><span class="rn">18</span><span class="c1">SINO</span><span class="c2">Sino</span></div>
<div class="row" style="top:767px"><span class="rn">19</span><span class="c1">VIT</span><span class="c2">Vít</span></div>
<div class="row" style="top:793px"><span class="rn">20</span><span class="c1">RUOTGA</span><span class="c2">Ruột gà</span></div>
<div class="row" style="top:819px"><span class="rn">21</span><span class="c1">ONGCUNG</span><span class="c2">ống cứng</span></div>
<div class="row" style="top:845px"><span class="rn">22</span><span class="c1">TYREN</span><span class="c2">Ty Ren</span></div>
<div class="row" style="top:871px"><span class="rn">23</span><span class="c1">CUMTREO</span><span class="c2">CUMTREO</span></div>
<div class="row" style="top:897px"><span class="rn">24</span><span class="c1">VOIGAT</span><span class="c2">Vòi Gạt</span></div>
<div class="row" style="top:923px"><span class="rn">25</span><span class="c1">RON</span><span class="c2">Ron</span></div>
<div class="row" style="top:949px"><span class="rn">26</span><span class="c1">OMEGA</span><span class="c2">OMEGA</span></div>
</div>
<!-- footer -->
<div style="left:4px;top:973px;width:1909px;height:1px;background:#ababab;z-index:2"></div>
<div class="hatch" style="left:2px;top:974px;width:1912px;height:34px"></div>
<div class="dash" style="left:35px;top:976px;width:563px;height:28px;background-color:#fff"></div>
<span class="t b" id="foot" style="left:510px;top:984px;font-size:12px;color:#f00">Có 115 nhóm</span>
<div class="dh" style="left:2px;top:1007px;width:1912px"></div>
<!-- status bar -->
<div class="dh" style="left:0;top:1013px;width:1920px"></div>
<span class="t b" id="st1" style="margin-top:1px;left:8px;top:1022px;font-size:11px">Chào mừng: Administrator đến với phần mềm MekongSoft</span>
<div style="left:349px;top:1022px;width:1px;height:11px;background:#b4bcc6"></div>
<span class="t b" id="st2" style="margin-top:1px;left:362px;top:1022px;font-size:11px">Version: 4.0.0</span>
<div style="left:451px;top:1022px;width:1px;height:11px;background:#b4bcc6"></div>
<span class="t b" id="st3" style="margin-top:1px;left:465px;top:1022px;font-size:11px;color:#f00">Ngày: 25/10/2023 10:08:52 SA</span>
<div class="dv" style="left:1613px;top:1015px;height:26px"></div>
<span class="t b" id="st4" style="margin-top:1px;left:1624px;top:1022px;font-size:11px">@2023 MekongSoft. Thông tin hỗ trợ: 0901 000 508</span>
<div style="left:0;top:1040px;width:1920px;height:1px;background:#d3e3e8"></div>

<!-- dialog -->
<div id="dlg" style="left:719px;top:421px;width:481px;height:198px;border:4px solid #6e6e6e;background:#fff;z-index:10;box-shadow:0 0 0 2px #fff">
 <div class="hatch" style="left:0;top:0;width:473px;height:25px"></div>
 <div style="left:0;top:25px;width:473px;height:1px;background-image:repeating-linear-gradient(90deg,#505050 0,#505050 3px,rgba(0,0,0,0) 3px,rgba(0,0,0,0) 6px)"></div>
 <svg style="left:2px;top:4px" width="16" height="16"><use href="#logo"/></svg>
 <span class="t b" id="dttl" style="left:22px;top:8px;font-size:11px">Chi tiết nhóm hàng hóa</span>
 <svg style="left:456px;top:9px" width="9.400" height="7.500"><use href="#s-x"/></svg>
 <span class="lbl" id="lb1" style="left:42px;top:43px">Mã nhóm (*)</span>
 <div class="fld" style="left:125px;top:38px;width:336px"><span class="t" style="left:3px;top:2px;height:17px;padding:2px 1px 0 1px;background:#0078d7;color:#fff;font-size:13px;line-height:13px">ON</span></div>
 <span class="lbl" id="lb2" style="left:36px;top:71px">Tên nhóm (*)</span>
 <div class="fld" style="left:125px;top:66px;width:336px"><span class="t" id="f2" style="left:4px;top:4px;font-size:13px;line-height:13px">Ống nước BM</span></div>
 <span class="lbl" id="lb3" style="left:58.25px;top:99px">CK % Sale</span>
 <div class="fld" style="left:125px;top:94px;width:109px"><span class="num">0.</span></div>
 <span class="lbl" id="lb4" style="left:273.25px;top:100px">CK Tiền Sale</span>
 <div class="fld" style="left:351px;top:94px;width:110px"><span class="num">0</span></div>
 <span class="lbl" id="lb5" style="left:23px;top:128px">CK % Thầu Phụ</span>
 <div class="fld" style="left:125px;top:122px;width:109px"><span class="num">0.</span></div>
 <span class="lbl" id="lb6" style="left:238px;top:128px">CK Tiền Thầu Phụ</span>
 <div class="fld" style="left:351px;top:122px;width:110px"><span class="num">0</span></div>
 <div class="hatch2" style="left:322px;top:150px;width:64px;height:28px;border:1px solid #ababab"><svg style="left:3px;top:5px" width="16" height="16"><use href="#s-save"/></svg><span class="t b" id="bluu" style="left:28px;top:7px;font-size:13px;color:#00f">Lưu</span></div>
 <div class="hatch" style="left:390px;top:150px;width:71px;height:28px;border:1px solid #ababab"><svg style="left:3px;top:5px" width="16" height="16"><use href="#s-folder"/></svg><span class="t b" id="bdong" style="left:26px;top:7px;font-size:13px;color:#f00">Đóng</span></div>
</div>
<!-- mouse cursor -->
<svg style="left:612px;top:343px;z-index:20" width="13" height="21" viewBox="0 0 13 21"><path d="M.7.9v15.800l3.600-3.500 2.500 5.900 2.200-.9-2.500-5.800h5.100z" fill="#fff" stroke="#000" stroke-width="1"/></svg>
</div>

</body></html>
